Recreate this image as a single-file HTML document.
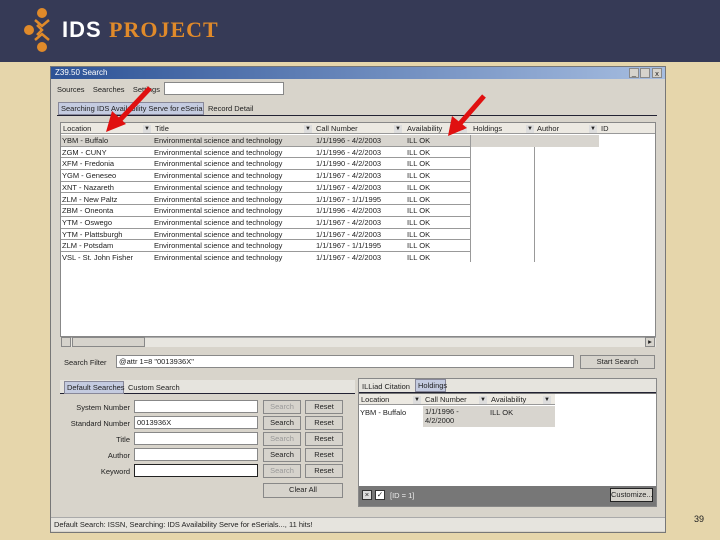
<!DOCTYPE html><html><head><style>
*{margin:0;padding:0;box-sizing:border-box}
body{width:720px;height:540px;overflow:hidden;background:#e6d6ab;font-family:"Liberation Sans",sans-serif;font-size:7.5px;color:#222;position:relative;white-space:nowrap}
.a{position:absolute}
.hdr{left:0;top:0;width:720px;height:62px;background:#363a56}
.win{left:50px;top:66px;width:616px;height:467px;background:#d8d4cb;border:1px solid #777}
.tb{left:51px;top:67px;width:614px;height:12px;background:linear-gradient(90deg,#2c5296,#a6bde0)}
.w{background:#fff;border:1px solid #888}
.btn{background:#d6d3cc;border:1px solid #888;text-align:center;line-height:12px}
.row{position:absolute;left:0;height:11.7px;border-bottom:1px solid #999;width:410px}
.row span{position:absolute;top:1px}
.hd span{position:absolute;top:1px}
.dd{position:absolute;width:8px;height:8px;top:2px;font-size:6px;text-align:center;line-height:8px;background:#ddd}
.lb{position:absolute;left:60px;width:70px;text-align:right}
</style></head><body>
<div class="a hdr"></div>
<svg class="a" style="left:22px;top:6px" width="40" height="48" viewBox="0 0 40 48">
<circle cx="20" cy="7" r="5" fill="#e08a2a"/><circle cx="20" cy="41" r="5" fill="#e08a2a"/><circle cx="7" cy="24" r="5" fill="#e08a2a"/>
<path d="M13 14 L20 20 L27 14 M13 34 L20 28 L27 34 M15 19 L20 24 L15 29" stroke="#e08a2a" stroke-width="2.5" fill="none"/></svg>
<div class="a" style="left:62px;top:17px;font-size:22px;font-weight:bold;letter-spacing:1px;color:#fff">IDS</div>
<div class="a" style="left:109px;top:17px;font-size:22px;font-weight:bold;letter-spacing:1px;color:#e08a2a;font-family:'Liberation Serif'">PROJECT</div>
<div class="a win"></div>
<div class="a tb"></div>
<div class="a" style="left:55px;top:68px;color:#fff;font-size:8px">Z39.50 Search</div>
<div class="a btn" style="left:629px;top:68px;width:10px;height:10px;line-height:8px">_</div><div class="a btn" style="left:640px;top:68px;width:10px;height:10px"></div><div class="a btn" style="left:652px;top:68px;width:10px;height:10px;line-height:9px">x</div>
<div class="a" style="left:57px;top:85px">Sources &nbsp;&nbsp; Searches &nbsp;&nbsp; Settings</div>
<div class="a w" style="left:164px;top:82px;width:120px;height:13px"></div>
<div class="a" style="left:57px;top:115px;width:600px;height:1px;background:#223"></div>
<div class="a" style="left:58px;top:102px;width:146px;height:13px;background:#c4cbe0;border:1px solid #889;line-height:11px;padding-left:2px;overflow:hidden">Searching IDS Availability Serve for eSerials</div>
<div class="a" style="left:208px;top:104px">Record Detail</div>
<div class="a w" style="left:60px;top:122px;width:596px;height:215px"></div>
<div class="a hd" style="left:61px;top:123px;width:594px;height:11px;background:#ece9e2;border-bottom:1px solid #999">
<span style="left:2px">Location</span><div class="dd" style="left:82px">▼</div>
<span style="left:94px">Title</span><div class="dd" style="left:243px">▼</div>
<span style="left:255px">Call Number</span><div class="dd" style="left:333px">▼</div>
<span style="left:346px">Availability</span><div class="dd" style="left:398px">▼</div>
<span style="left:412px">Holdings</span><div class="dd" style="left:465px">▼</div>
<span style="left:476px">Author</span><div class="dd" style="left:528px">▼</div>
<span style="left:540px">ID</span></div>
<div class="a" style="left:61px;top:135px;width:410px;height:127px">
<div class="row" style="top:0;background:#d8d5cf"><span style="left:1px">YBM - Buffalo</span><span style="left:93px">Environmental science and technology</span><span style="left:255px">1/1/1996 - 4/2/2003</span><span style="left:346px">ILL OK</span></div>
<div class="row" style="top:11.7px"><span style="left:1px">ZGM - CUNY</span><span style="left:93px">Environmental science and technology</span><span style="left:255px">1/1/1996 - 4/2/2003</span><span style="left:346px">ILL OK</span></div>
<div class="row" style="top:23.4px"><span style="left:1px">XFM - Fredonia</span><span style="left:93px">Environmental science and technology</span><span style="left:255px">1/1/1990 - 4/2/2003</span><span style="left:346px">ILL OK</span></div>
<div class="row" style="top:35.1px"><span style="left:1px">YGM - Geneseo</span><span style="left:93px">Environmental science and technology</span><span style="left:255px">1/1/1967 - 4/2/2003</span><span style="left:346px">ILL OK</span></div>
<div class="row" style="top:46.8px"><span style="left:1px">XNT - Nazareth</span><span style="left:93px">Environmental science and technology</span><span style="left:255px">1/1/1967 - 4/2/2003</span><span style="left:346px">ILL OK</span></div>
<div class="row" style="top:58.5px"><span style="left:1px">ZLM - New Paltz</span><span style="left:93px">Environmental science and technology</span><span style="left:255px">1/1/1967 - 1/1/1995</span><span style="left:346px">ILL OK</span></div>
<div class="row" style="top:70.2px"><span style="left:1px">ZBM - Oneonta</span><span style="left:93px">Environmental science and technology</span><span style="left:255px">1/1/1996 - 4/2/2003</span><span style="left:346px">ILL OK</span></div>
<div class="row" style="top:81.9px"><span style="left:1px">YTM - Oswego</span><span style="left:93px">Environmental science and technology</span><span style="left:255px">1/1/1967 - 4/2/2003</span><span style="left:346px">ILL OK</span></div>
<div class="row" style="top:93.6px"><span style="left:1px">YTM - Plattsburgh</span><span style="left:93px">Environmental science and technology</span><span style="left:255px">1/1/1967 - 4/2/2003</span><span style="left:346px">ILL OK</span></div>
<div class="row" style="top:105.3px"><span style="left:1px">ZLM - Potsdam</span><span style="left:93px">Environmental science and technology</span><span style="left:255px">1/1/1967 - 1/1/1995</span><span style="left:346px">ILL OK</span></div>
<div class="row" style="top:117px;border:0"><span style="left:1px">VSL - St. John Fisher</span><span style="left:93px">Environmental science and technology</span><span style="left:255px">1/1/1967 - 4/2/2003</span><span style="left:346px">ILL OK</span></div>
</div>
<div class="a" style="left:470px;top:135px;width:1px;height:127px;background:#999"></div>
<div class="a" style="left:534px;top:135px;width:1px;height:127px;background:#999"></div>
<div class="a" style="left:471px;top:135px;width:128px;height:12px;background:#d8d5cf"></div>
<div class="a" style="left:61px;top:337px;width:595px;height:10px;background:#e8e6e0;border-top:1px solid #aaa"></div>
<div class="a btn" style="left:61px;top:337px;width:10px;height:10px"></div>
<div class="a btn" style="left:72px;top:337px;width:73px;height:10px"></div>
<div class="a btn" style="left:645px;top:337px;width:10px;height:10px;line-height:8px">▸</div>
<div class="a" style="left:64px;top:358px">Search Filter</div>
<div class="a w" style="left:116px;top:355px;width:458px;height:13px;padding-left:2px;line-height:11px">@attr 1=8 "0013936X"</div>
<div class="a btn" style="left:580px;top:355px;width:75px;height:14px">Start Search</div>
<div class="a" style="left:60px;top:380px;width:295px;height:14px;background:#e6e4de;border-bottom:1px solid #223"></div>
<div class="a" style="left:64px;top:381px;width:60px;height:13px;background:#c4cbe0;border:1px solid #889;line-height:11px;padding-left:2px">Default Searches</div>
<div class="a" style="left:128px;top:383px">Custom Search</div>
<div class="lb" style="top:403px">System Number</div>
<div class="lb" style="top:419px">Standard Number</div>
<div class="lb" style="top:435px">Title</div>
<div class="lb" style="top:451px">Author</div>
<div class="lb" style="top:467px">Keyword</div>
<div class="a w" style="left:134px;top:400px;width:124px;height:13px"></div>
<div class="a w" style="left:134px;top:416px;width:124px;height:13px;padding-left:2px;line-height:11px">0013936X</div>
<div class="a w" style="left:134px;top:432px;width:124px;height:13px"></div>
<div class="a w" style="left:134px;top:448px;width:124px;height:13px"></div>
<div class="a w" style="left:134px;top:464px;width:124px;height:13px;border-color:#222"></div>
<div class="a btn" style="left:263px;top:400px;width:38px;height:14px;color:#999">Search</div><div class="a btn" style="left:305px;top:400px;width:38px;height:14px">Reset</div>
<div class="a btn" style="left:263px;top:416px;width:38px;height:14px">Search</div><div class="a btn" style="left:305px;top:416px;width:38px;height:14px">Reset</div>
<div class="a btn" style="left:263px;top:432px;width:38px;height:14px;color:#999">Search</div><div class="a btn" style="left:305px;top:432px;width:38px;height:14px">Reset</div>
<div class="a btn" style="left:263px;top:448px;width:38px;height:14px">Search</div><div class="a btn" style="left:305px;top:448px;width:38px;height:14px">Reset</div>
<div class="a btn" style="left:263px;top:464px;width:38px;height:14px;color:#999">Search</div><div class="a btn" style="left:305px;top:464px;width:38px;height:14px">Reset</div>
<div class="a btn" style="left:263px;top:483px;width:80px;height:15px">Clear All</div>
<div class="a" style="left:358px;top:378px;width:299px;height:129px;background:#777;border:1px solid #888"></div>
<div class="a" style="left:359px;top:379px;width:297px;height:14px;background:#e6e4de;border-bottom:1px solid #223"></div>
<div class="a" style="left:362px;top:382px">ILLiad Citation</div>
<div class="a" style="left:415px;top:379px;width:31px;height:13px;background:#c4cbe0;border:1px solid #889;line-height:11px;padding-left:2px">Holdings</div>
<div class="a" style="left:359px;top:394px;width:297px;height:92px;background:#fff"></div>
<div class="a hd" style="left:359px;top:394px;width:196px;height:11px;background:#ece9e2;border-bottom:1px solid #999">
<span style="left:2px">Location</span><div class="dd" style="left:54px">▼</div><span style="left:66px">Call Number</span><div class="dd" style="left:120px">▼</div><span style="left:132px">Availability</span><div class="dd" style="left:184px">▼</div></div>
<div class="a" style="left:360px;top:408px">YBM - Buffalo</div>
<div class="a" style="left:423px;top:406px;width:132px;height:21px;background:#d8d5cf;padding:1px 2px;line-height:9px">1/1/1996 -<br>4/2/2000</div>
<div class="a" style="left:490px;top:408px">ILL OK</div>
<div class="a" style="left:362px;top:490px;width:10px;height:10px;background:#ddd;border:1px solid #333;text-align:center;line-height:8px">×</div>
<div class="a" style="left:375px;top:490px;width:10px;height:10px;background:#fff;border:1px solid #333;text-align:center;line-height:8px">✓</div>
<div class="a" style="left:390px;top:491px;color:#eee">[ID = 1]</div>
<div class="a btn" style="left:610px;top:488px;width:43px;height:14px;border-color:#222">Customize...</div>
<div class="a" style="left:51px;top:517px;width:614px;height:14px;background:#e6e4de;border-top:1px solid #aaa;padding-left:3px;line-height:13px">Default Search: ISSN, Searching: IDS Availability Serve for eSerials..., 11 hits!</div>
<div class="a" style="left:694px;top:514px;font-size:9px">39</div>
<svg class="a" style="left:0;top:0" width="720" height="540">
<path d="M150 88 L118 122" stroke="#e01010" stroke-width="5"/><path d="M106 132 L112 111 L126 124 Z" fill="#e01010"/>
<path d="M484 96 L457 127" stroke="#e01010" stroke-width="5"/><path d="M448 136 L452 116 L467 128 Z" fill="#e01010"/>
</svg>
</body></html>
